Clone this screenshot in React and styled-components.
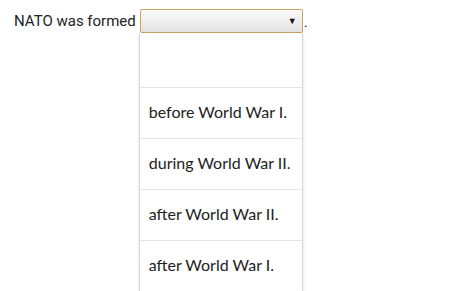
import React from 'react'
import styled, { createGlobalStyle } from 'styled-components'

const GlobalStyle = createGlobalStyle`
  html, body {
    margin: 0;
    min-height: 100%;
    background: #ffffff;
    font-family: Roboto, "Liberation Sans", sans-serif;
  }
`

const Sentence = styled.div`
  display: flex;
  align-items: flex-start;
  padding: 9px 0 0 14px;
  font-size: 15px;
  line-height: 24px;
  color: #222;
`

const SelectWrap = styled.div`
  display: flex;
  flex-direction: column;
  margin-left: 4px;
`

const SelectBox = styled.div`
  box-sizing: border-box;
  width: 163px;
  height: 24px;
  border: 1px solid #c9a45e;
  border-radius: 2px;
  background: linear-gradient(#fbfbfb, #e2e2e2);
  display: flex;
  align-items: center;
  justify-content: flex-end;
  padding-right: 5px;
  font-size: 9px;
  color: #111;
`

const Period = styled.span`
  margin-left: 1px;
  line-height: 27px;
`

const Dropdown = styled.ul`
  width: 164px;
  margin: 0 0 0 -1px;
  padding: 0;
  list-style: none;
  background: #fff;
  box-sizing: border-box;
  border-left: 1px solid #d6d6d6;
  border-right: 1px solid #d6d6d6;
  box-shadow: 0 1px 3px rgba(0, 0, 0, 0.12);
  font-family: Lato, "Open Sans", sans-serif;
  font-size: 16px;
  line-height: 20px;
  color: #222;
`

const Option = styled.li`
  box-sizing: border-box;
  height: ${p => (p.$first ? '54px' : '51px')};
  display: flex;
  align-items: center;
  padding: 0 0 2px 9px;
  border-top: ${p => (p.$first ? 'none' : '1px solid #e3e3e3')};
`

const options = ['', 'before World War I.', 'during World War II.', 'after World War II.', 'after World War I.']

export default function App() {
  return (
    <>
      <GlobalStyle />
      <Sentence>
        NATO was formed
        <SelectWrap>
          <SelectBox>▼</SelectBox>
          <Dropdown>
            {options.map((o, i) => (
              <Option key={i} $first={i === 0}>{o}</Option>
            ))}
          </Dropdown>
        </SelectWrap>
        <Period>.</Period>
      </Sentence>
    </>
  )
}
